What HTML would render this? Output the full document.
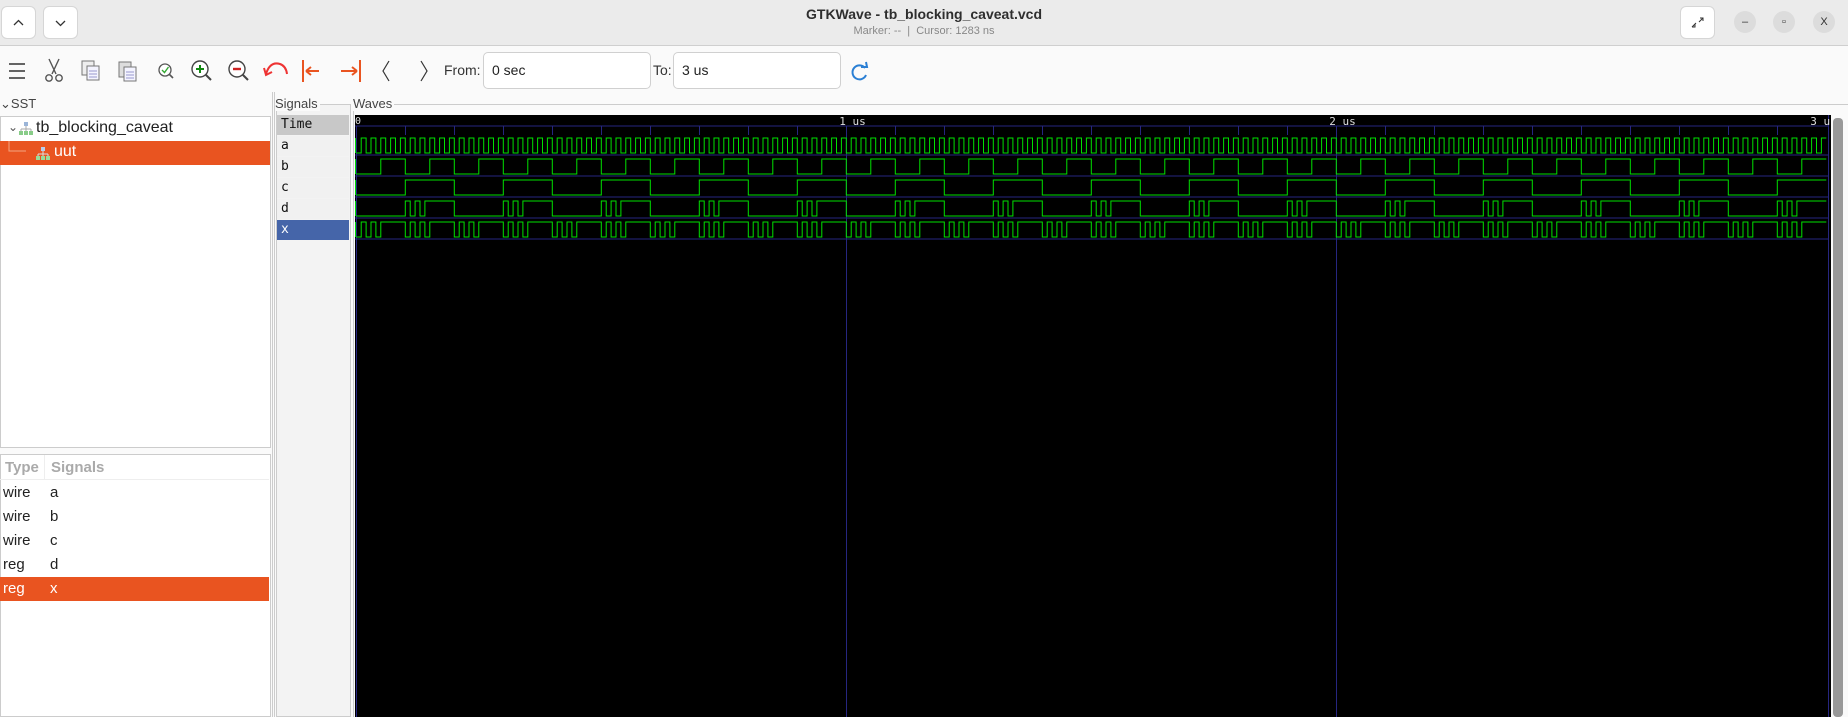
<!DOCTYPE html>
<html><head><meta charset="utf-8"><style>
*{margin:0;padding:0;box-sizing:border-box}
body{width:1848px;height:717px;overflow:hidden;background:#fafafa;font-family:"Liberation Sans","DejaVu Sans",sans-serif;position:relative}
.abs{position:absolute}
.btn{position:absolute;background:#fff;border:1px solid #d6d6d6;border-radius:6px}
.circ{position:absolute;width:22px;height:22px;border-radius:11px;background:#dcdcdc;top:11px;font-size:11px;color:#333;text-align:center;line-height:22px}
.inp{position:absolute;background:#fff;border:1px solid #d0d0d0;border-radius:5px;height:37px;top:52px;font-size:14px;line-height:35px;padding-left:8px;color:#222}
.lbl{position:absolute;font-size:14px;color:#333}
.row{position:absolute;left:0;width:269px;height:24px;font-size:15px;line-height:24px;color:#222}
.srow{position:absolute;left:277px;width:72px;height:20px;font-family:"DejaVu Sans Mono","Liberation Mono",monospace;font-size:13px;line-height:20px;padding-left:4px;background:#f1f1f1;color:#111}
.plab{position:absolute;font-size:13px;color:#444;background:#fafafa;padding-right:2px;z-index:5}
</style></head><body>
<!-- title bar -->
<div class="abs" style="left:0;top:0;width:1848px;height:46px;background:#ebebeb;border-bottom:1px solid #cfcfcf"></div>
<div class="btn" style="left:1px;top:6px;width:35px;height:33px"></div>
<div class="btn" style="left:43px;top:6px;width:35px;height:33px"></div>
<svg class="abs" style="left:0;top:0" width="90" height="46"><path d="M14 25 L18.5 20.5 L23 25" fill="none" stroke="#333" stroke-width="1.3"/><path d="M56 21 L60.5 25.5 L65 21" fill="none" stroke="#333" stroke-width="1.3"/></svg>
<div class="abs" style="left:0;width:1848px;top:6px;text-align:center;font-size:14px;font-weight:bold;color:#2e2e2e">GTKWave - tb_blocking_caveat.vcd</div>
<div class="abs" style="left:0;width:1848px;top:25px;text-align:center;font-size:11px;color:#888">Marker: -- &nbsp;|&nbsp; Cursor: 1283 ns</div>
<div class="btn" style="left:1680px;top:6px;width:35px;height:33px"></div>
<svg class="abs" style="left:1680px;top:6px" width="35" height="33"><path d="M20 12 L23 12 L23 15 M23 12 L19 16 M15 18 L15 21 L12 21 M12 21 L16 17" fill="none" stroke="#333" stroke-width="1"/></svg>
<div class="circ" style="left:1734px">–</div>
<div class="circ" style="left:1773px">▫</div>
<div class="circ" style="left:1813px">X</div>
<!-- toolbar -->
<svg class="abs" style="left:0;top:46px" width="480" height="50">
<g stroke="#333" stroke-width="1.6"><path d="M9 18H25M9 25H25M9 32H25"/></g>
<g fill="none" stroke="#555" stroke-width="1.4"><path d="M49 13 L56 28 M59 13 L52 28"/><circle cx="49" cy="32" r="3.2"/><circle cx="59" cy="32" r="3.2"/></g>
<g stroke="#777" stroke-width="1" fill="#eee"><rect x="82" y="15" width="12" height="14"/><rect x="87" y="20" width="12" height="14" fill="#f4f4ff"/></g>
<g stroke="#99c" stroke-width="1"><path d="M89 25H97M89 28H97M89 31H97"/></g>
<g stroke="#777" stroke-width="1" fill="#ddd"><rect x="119" y="16" width="12" height="15"/><rect x="124" y="21" width="12" height="14" fill="#f4f4ff"/></g>
<g stroke="#99c" stroke-width="1"><path d="M126 26H134M126 29H134M126 32H134"/></g>
<circle cx="165" cy="24" r="6" fill="#fff" stroke="#555" stroke-width="1.3"/><path d="M169 28 L173 32" stroke="#555" stroke-width="1.6"/><path d="M162 24 L164.5 26.5 L168.5 21" fill="none" stroke="#3a3" stroke-width="1.4"/>
<circle cx="200" cy="23" r="8" fill="#fff" stroke="#444" stroke-width="1.4"/><path d="M206 29 L211 34" stroke="#444" stroke-width="2"/><path d="M196 23H204M200 19V27" stroke="#181" stroke-width="2"/>
<circle cx="237" cy="23" r="8" fill="#fff" stroke="#444" stroke-width="1.4"/><path d="M243 29 L248 34" stroke="#444" stroke-width="2"/><path d="M233 23H241" stroke="#c22" stroke-width="2.4"/>
<path d="M266 28 Q270 15 280 18 Q286 20 287 28" fill="none" stroke="#e33" stroke-width="2"/><path d="M264 22 L266 29 L272 26" fill="none" stroke="#e33" stroke-width="2"/>
<g stroke="#e95420" stroke-width="2" fill="none"><path d="M303 14V36M306 25H319M306 25L311 21M306 25L311 29"/><path d="M360 14V36M341 25H357M357 25L352 21M357 25L352 29"/></g>
<g stroke="#333" stroke-width="1.2" fill="none"><path d="M389 15 L383 25 L389 35"/><path d="M421 15 L427 25 L421 35"/></g>
</svg>
<div class="lbl" style="left:444px;top:62px">From:</div>
<div class="inp" style="left:483px;width:168px">0 sec</div>
<div class="lbl" style="left:653px;top:62px">To:</div>
<div class="inp" style="left:673px;width:168px">3 us</div>
<svg class="abs" style="left:848px;top:60px" width="24" height="24"><path d="M17 8 A7 7 0 1 0 18 15" fill="none" stroke="#2a7fd4" stroke-width="2"/><path d="M13 7 L19 7 L18 2" fill="none" stroke="#2a7fd4" stroke-width="2"/></svg>
<!-- left panels -->
<div class="abs" style="left:0;top:96px;font-size:13px;color:#444">⌄SST</div>
<div class="abs" style="left:0;top:116px;width:271px;height:332px;background:#fff;border:1px solid #ccc"></div>
<div class="abs" style="left:8px;top:120px;font-size:12px;color:#555">⌄</div>
<svg class="abs" style="left:18px;top:120px" width="16" height="16"><rect x="6" y="2" width="4" height="4" fill="#9bb5d8"/><path d="M8 6V9M3 9H13M3 9V11M8 9V11M13 9V11" stroke="#aaa"/><rect x="1" y="11" width="4" height="4" fill="#8c8"/><rect x="6" y="11" width="4" height="4" fill="#8c8"/><rect x="11" y="11" width="4" height="4" fill="#8c8"/></svg>
<div class="abs" style="left:36px;top:119px;font-size:16px;color:#222">tb_blocking_caveat</div>
<div class="abs" style="left:0;top:141px;width:270px;height:24px;background:#e95420"></div>
<svg class="abs" style="left:0;top:141px" width="60" height="24"><path d="M9 0V10H26" fill="none" stroke="#f3a57f"/><g transform="translate(35,4)"><rect x="6" y="2" width="4" height="4" fill="#b8cdec"/><path d="M8 6V9M3 9H13M3 9V11M8 9V11M13 9V11" stroke="#ddd"/><rect x="1" y="11" width="4" height="4" fill="#9d9"/><rect x="6" y="11" width="4" height="4" fill="#9d9"/><rect x="11" y="11" width="4" height="4" fill="#9d9"/></g></svg>
<div class="abs" style="left:54px;top:143px;font-size:16px;color:#fff">uut</div>
<div class="abs" style="left:0;top:454px;width:271px;height:263px;background:#fff;border:1px solid #ccc"></div>
<div class="abs" style="left:0;top:455px;width:269px;height:25px;border-bottom:1px solid #eee"></div>
<div class="abs" style="left:5px;top:459px;font-size:15px;font-weight:bold;color:#aaa">Type</div>
<div class="abs" style="left:44px;top:455px;width:1px;height:25px;background:#eee"></div>
<div class="abs" style="left:51px;top:459px;font-size:15px;font-weight:bold;color:#aaa">Signals</div>
<div class="row" style="top:481px"><span style="position:absolute;left:3px">wire</span><span style="position:absolute;left:50px">a</span></div>
<div class="row" style="top:505px"><span style="position:absolute;left:3px">wire</span><span style="position:absolute;left:50px">b</span></div>
<div class="row" style="top:529px"><span style="position:absolute;left:3px">wire</span><span style="position:absolute;left:50px">c</span></div>
<div class="row" style="top:553px"><span style="position:absolute;left:3px">reg</span><span style="position:absolute;left:50px">d</span></div>
<div class="row" style="top:577px;background:#e95420;color:#fff"><span style="position:absolute;left:3px">reg</span><span style="position:absolute;left:50px">x</span></div>
<div class="abs" style="left:272px;top:92px;width:1px;height:625px;background:#ccc"></div>
<div class="abs" style="left:274px;top:92px;width:1px;height:625px;background:#ccc"></div>
<!-- signals panel -->
<div class="abs" style="left:276px;top:104px;width:75px;height:613px;border:1px solid #ccc;background:#f3f3f3"></div>
<div class="plab" style="left:275px;top:96px">Signals</div>
<div class="srow" style="top:115px;background:#c8c8c8">Time</div>
<div class="srow" style="top:136px">a</div>
<div class="srow" style="top:157px">b</div>
<div class="srow" style="top:178px">c</div>
<div class="srow" style="top:199px">d</div>
<div class="srow" style="top:220px;background:#4565a9;color:#fff">x</div>
<div class="abs" style="left:353px;top:104px;width:1495px;height:613px;border-left:1px solid #ccc;border-top:1px solid #ccc"></div>
<div class="plab" style="left:353px;top:96px">Waves</div>
<svg class="abs" id="w" style="left:355px;top:115px;background:#000" width="1476" height="602"></svg>
<div class="abs" style="left:1833px;top:118px;width:10px;height:599px;background:#999;border-radius:4px"></div>
<script>
var s=document.getElementById('w'),o=1.3,k=0.49,h='';
function X(t){return o+t*k}
function line(x1,y1,x2,y2,c,w){h+='<line x1="'+x1+'" y1="'+y1+'" x2="'+x2+'" y2="'+y2+'" stroke="'+c+'" stroke-width="'+(w||1)+'"/>'}
var B='#262680';
line(0,11,1474,11,B);
for(var t=100;t<3000;t+=100){var xx=X(t)+.5|0;line(xx+.5,11,xx+.5,20,B)}
[0,1000,2000].forEach(function(t){var xx=(X(t)|0)+.5;line(xx,11,xx,602,B)});
line(1473.5,0,1473.5,602,B);
for(var i=0;i<5;i++)line(0,40+21*i,1474,40+21*i,B);
function a(t){return t<10?0:(Math.floor(t/10)%2)}
function b(t){return Math.floor(t/50)%2}
function c(t){return Math.floor(t/100)%2}
function d(t){return c(t)&&(!a(t)||b(t))?1:0}
function x(t){return a(t)||b(t)?1:0}
[a,b,c,d,x].forEach(function(f,i){
 var hi=23+21*i,lo=38+21*i,p='',prev=null;
 for(var t=0;t<=3000;t+=10){var v=f(t<3000?t:2999),y=v?hi:lo;
  if(prev===null)p+='M'+X(0)+' '+y;else if(v!==prev)p+='L'+X(t)+' '+(prev?hi:lo)+'L'+X(t)+' '+y;prev=v}
 p+='L'+X(3000)+' '+(prev?hi:lo);
 h+='<path d="'+p+'" fill="none" stroke="#00e000" stroke-width="1"/>';
 line(0.5,hi,0.5,lo,'#00e000');
});
h+='<text x="0" y="9" fill="#ddd" font-family="DejaVu Sans Mono,monospace" font-size="10">0</text>';
h+='<text x="'+(X(1000)-7)+'" y="10" fill="#ddd" font-family="DejaVu Sans Mono,monospace" font-size="11">1 us</text>';
h+='<text x="'+(X(2000)-7)+'" y="10" fill="#ddd" font-family="DejaVu Sans Mono,monospace" font-size="11">2 us</text>';
h+='<text x="'+(X(3000)-16)+'" y="10" fill="#ddd" font-family="DejaVu Sans Mono,monospace" font-size="11">3 u</text>';
s.innerHTML=h;
</script>
</body></html>
